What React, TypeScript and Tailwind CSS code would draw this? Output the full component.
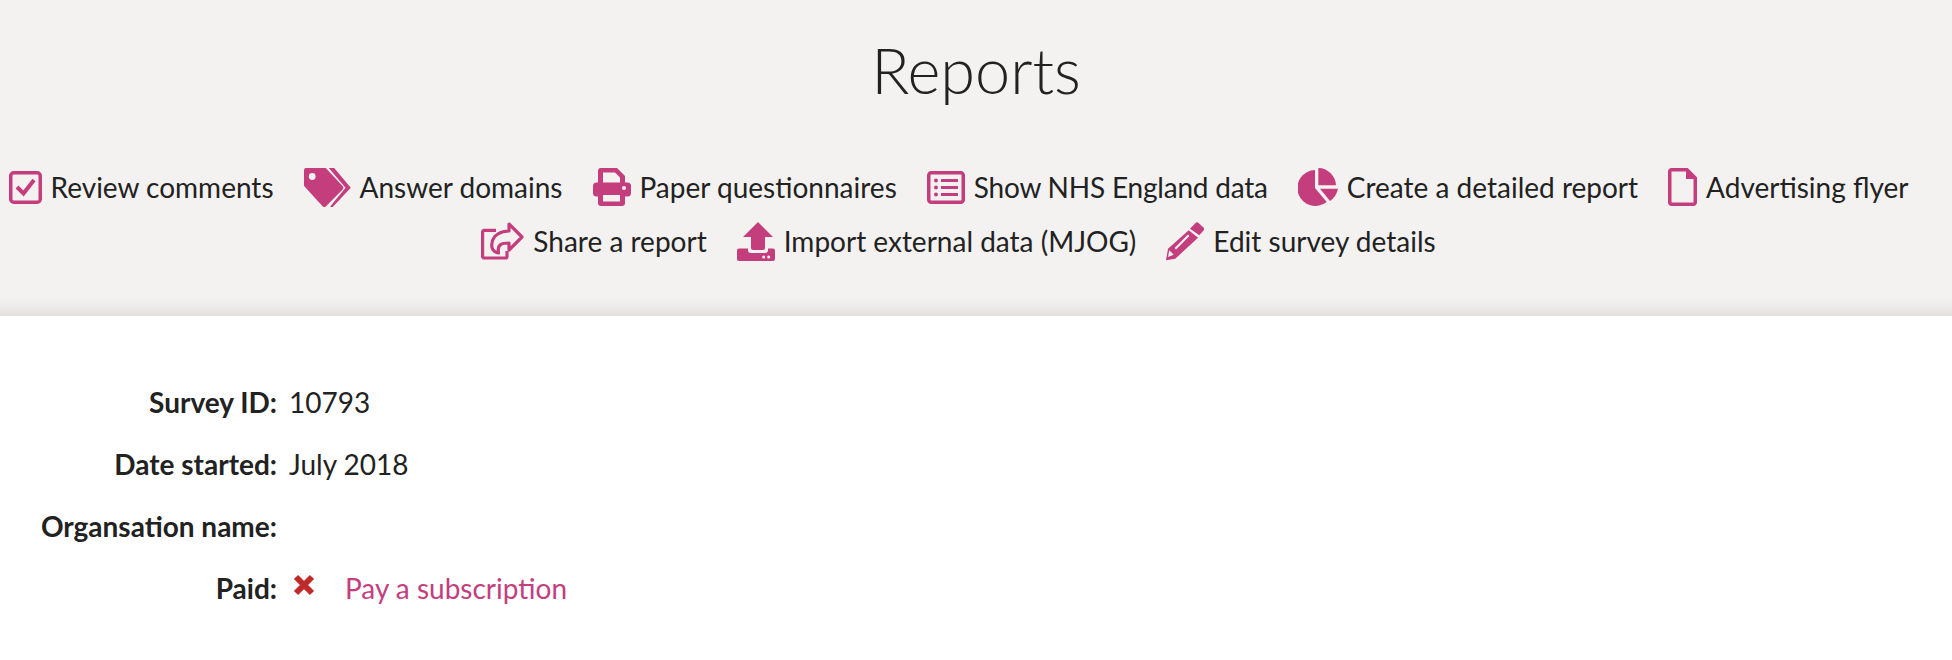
import type { ReactNode } from 'react';

const bg = '#f3f2f1';

const CheckIcon = () => (
  <svg width="33" height="33" viewBox="0 0 33 33">
    <rect x="1.75" y="1.75" width="29.5" height="29.5" rx="3" fill="none" stroke="currentColor" strokeWidth="3.5" />
    <path d="M8 16l6.5 6.5L25 9" fill="none" stroke="currentColor" strokeWidth="4" />
  </svg>
);

const TagsIcon = () => (
  <svg width="47" height="39" viewBox="0 0 47.5 38" preserveAspectRatio="none">
    <path d="M2 0H22L39 17.5a2.5 2.5 0 010 3.5L22 37.5a2 2 0 01-3 0L1 18.5a3 3 0 01-1-3V2a2 2 0 012-2z" fill="currentColor" />
    <circle cx="8.3" cy="8.3" r="3.4" fill={bg} />
    <path d="M25 0H30.5L47.3 19.3 29.5 37.5a2 2 0 01-3 0L42 19.3z" fill="currentColor" />
  </svg>
);

const PrintIcon = () => (
  <svg width="38" height="38" viewBox="0 0 38 38">
    <path d="M5 3a3 3 0 013-3H24l8 8V15H5z" fill="currentColor" />
    <path d="M10 4.5H22L27 9.5V15H10z" fill={bg} />
    <rect x="0" y="14.5" width="38" height="14" rx="3.5" fill="currentColor" />
    <circle cx="31" cy="20" r="2" fill={bg} />
    <rect x="5" y="24" width="27" height="14" rx="3" fill="currentColor" />
    <rect x="10" y="27" width="17" height="6.5" fill={bg} />
  </svg>
);

const ListIcon = () => (
  <svg width="38" height="33" viewBox="0 0 38 33">
    <rect x="1.75" y="1.75" width="34.5" height="29.5" rx="2.5" fill="none" stroke="currentColor" strokeWidth="3.5" />
    <circle cx="9" cy="9.5" r="2" fill="currentColor" />
    <circle cx="9" cy="16.5" r="2" fill="currentColor" />
    <circle cx="9" cy="23.5" r="2" fill="currentColor" />
    <path d="M14 9.5H31M14 16.5H31M14 23.5H31" stroke="currentColor" strokeWidth="3" />
  </svg>
);

const PieIcon = () => (
  <svg width="40" height="38" viewBox="0 0 40 38">
    <path d="M17 2V20L28.7 34A18 18 0 1117 2z" fill="currentColor" />
    <path d="M20.3 0A18 18 0 0138 17.3H20.3z" fill="currentColor" />
    <path d="M22 20.7H40A20 20 0 0132 33z" fill="currentColor" />
  </svg>
);

const FileIcon = () => (
  <svg width="29" height="38" viewBox="0 0 29 38">
    <path d="M3.5 1.75H19L27.25 10V34.5a1.75 1.75 0 01-1.75 1.75H3.5A1.75 1.75 0 011.75 34.5V3.5A1.75 1.75 0 013.5 1.75z" fill="none" stroke="currentColor" strokeWidth="3.5" />
    <path d="M18 2V11H27z" fill="currentColor" />
  </svg>
);

const ShareIcon = () => (
  <svg width="43" height="38" viewBox="0 0 43 38">
    <path d="M15 8.3H3.3A1.6 1.6 0 001.6 10V34.4A1.6 1.6 0 003.3 36H24.5A1.6 1.6 0 0026 34.4V29" fill="none" stroke="currentColor" strokeWidth="3.2" />
    <path d="M28 2L41 15 28 28V21C21 21 16 22 17.5 31 12 30 10 26 11 21 12 13 20 9 28 9z" fill="none" stroke="currentColor" strokeWidth="3.2" strokeLinejoin="round" />
  </svg>
);

const UploadIcon = () => (
  <svg width="38" height="39" viewBox="0 0 38 39">
    <path d="M2 26.5H11V28a3 3 0 003 3H28a3 3 0 003-3V26.5H36a2 2 0 012 2V37a2 2 0 01-2 2H2a2 2 0 01-2-2V28.5a2 2 0 012-2z" fill="currentColor" />
    <path d="M21 0L36 15H28V26a2 2 0 01-2 2H16a2 2 0 01-2-2V15H6z" fill="currentColor" />
    <circle cx="26.7" cy="35" r="1.5" fill={bg} />
    <circle cx="31.7" cy="35" r="1.5" fill={bg} />
  </svg>
);

const PencilIcon = () => (
  <svg width="38" height="39" viewBox="0 0 38 39">
    <path d="M24 6.7L29.5 1a2 2 0 013 0L37.5 5.5a2 2 0 010 3L33.3 13.3z" fill="currentColor" />
    <path d="M22.7 8.3L32 15.7 9.3 36.7 0 38.3 2 26.7z" fill="currentColor" />
    <path d="M9.3 26.7L22.7 13.3" stroke={bg} strokeWidth="2" />
    <path d="M3.3 28.3L7.7 32.7 2 35z" fill={bg} />
  </svg>
);

function NavItem({ icon, label, className }: { icon: ReactNode; label: string; className?: string }) {
  return (
    <a className={`flex items-center h-[54px] gap-[9px] mr-[30px] text-[#222222] cursor-pointer ${className ?? ''}`}>
      <span className="text-[#c43e7d] flex">{icon}</span>
      {label}
    </a>
  );
}

function Row({ label, children }: { label: string; children?: ReactNode }) {
  return (
    <div className="flex h-[62px] items-center">
      <div className="w-[277px] text-right font-bold">{label}</div>
      <div className="ml-[12px] flex items-center">{children}</div>
    </div>
  );
}

export default function App() {
  return (
    <div className="min-h-[660px] bg-white text-[#222222] text-[28px] font-['Lato',sans-serif]">
      {/* Header */}
      <div className="h-[316px] bg-[#f3f2f1] shadow-[inset_0_-22px_22px_-22px_rgba(0,0,0,0.14)] pt-[34px]">
        <h1 className="text-center text-[63px] leading-[72px] font-light mb-[54px]">Reports</h1>
        <div className="flex flex-wrap justify-center pr-[5px]">
          <NavItem icon={<CheckIcon />} label="Review comments" />
          <NavItem icon={<TagsIcon />} label="Answer domains" />
          <NavItem icon={<PrintIcon />} label="Paper questionnaires" />
          <NavItem icon={<ListIcon />} label="Show NHS England data" className="tracking-[-0.2px]" />
          <NavItem icon={<PieIcon />} label="Create a detailed report" />
          <NavItem icon={<FileIcon />} label="Advertising flyer" />
          <NavItem icon={<ShareIcon />} label="Share a report" />
          <NavItem icon={<UploadIcon />} label="Import external data (MJOG)" />
          <NavItem icon={<PencilIcon />} label="Edit survey details" />
        </div>
      </div>

      {/* Survey details */}
      <div className="pt-[55px]">
        <Row label="Survey ID:">10793</Row>
        <Row label="Date started:">July 2018</Row>
        <Row label="Organsation name:" />
        <Row label="Paid:">
          <svg width="22" height="22" viewBox="0 0 22 22" className="ml-[4px] mb-[6px]">
            <path d="M3 3L19 19M19 3L3 19" stroke="#c12a2a" strokeWidth="6" />
          </svg>
          <a className="ml-[30px] text-[#c43e7d] cursor-pointer">Pay a subscription</a>
        </Row>
      </div>
    </div>
  );
}
